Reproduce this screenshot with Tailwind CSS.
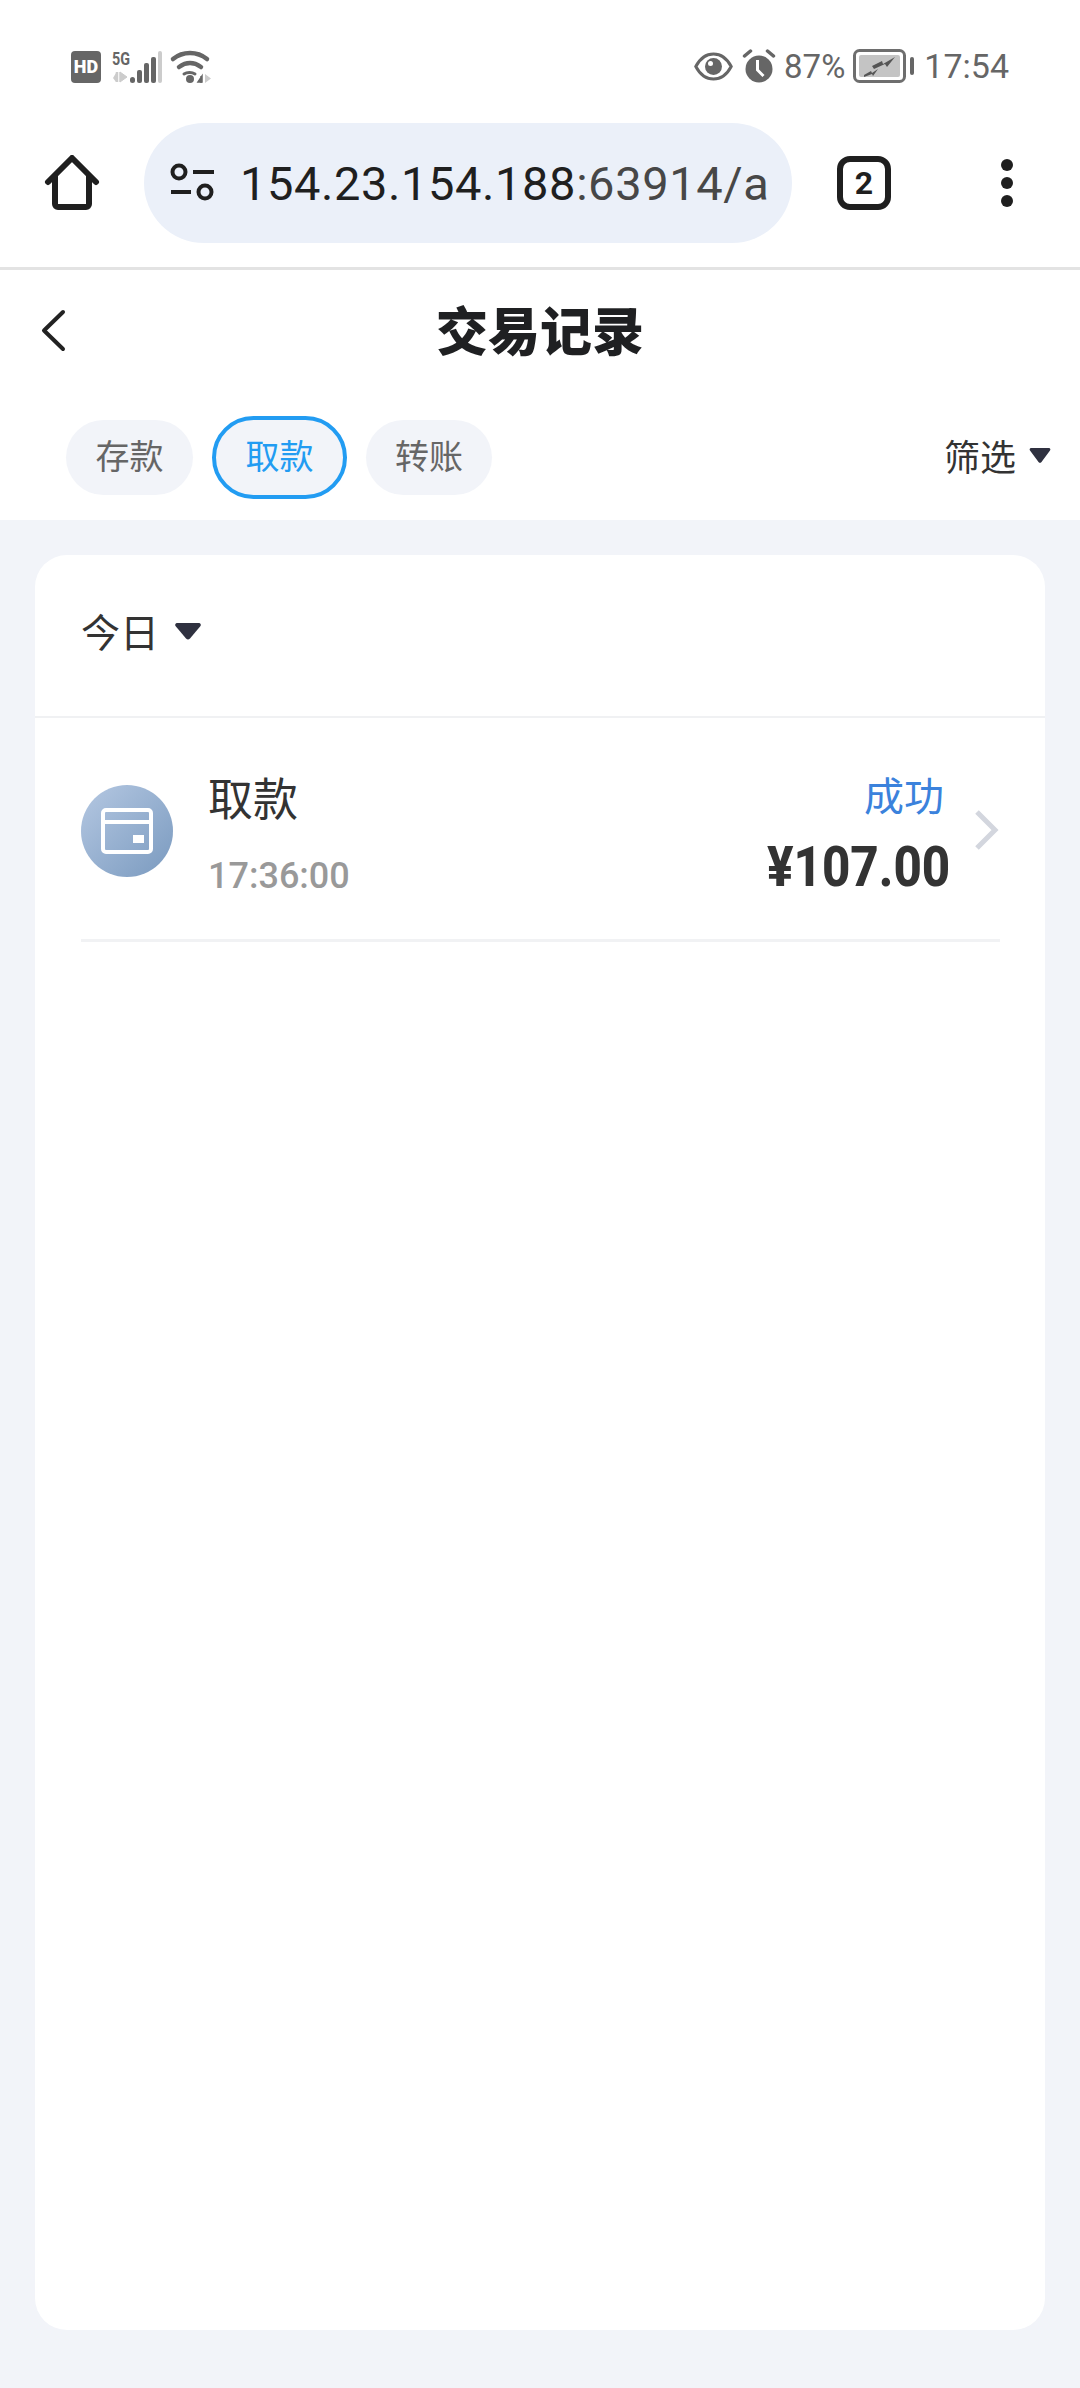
<!DOCTYPE html>
<html lang="zh-CN">
<head>
  <meta charset="UTF-8">
  <meta name="viewport" content="width=device-width, initial-scale=1.0">
  <title>交易记录</title>
  <script src="https://cdn.jsdelivr.net/npm/@tailwindcss/browser@4"></script>
</head>
<body class="bg-[#f2f4f9] font-['Roboto','Noto_Sans_CJK_SC',sans-serif]">
  <div class="w-[1080px] h-[2388px] flex flex-col overflow-hidden">

    <!-- Status bar -->
    <div class="bg-white h-[123px] shrink-0 flex items-start justify-between pt-[48px] pl-[70px] pr-[71px]">
      <div class="flex items-center h-[36px]">
        <svg width="142" height="36" viewBox="0 0 142 36">
          <rect x="1" y="3" width="30" height="32" rx="4" fill="#666"/>
          <text x="16" y="25" text-anchor="middle" font-family="Roboto" font-weight="900" font-size="18" fill="#fff">HD</text>
          <text x="42" y="17" font-family="Roboto" font-weight="700" font-size="19" fill="#666" textLength="18" lengthAdjust="spacingAndGlyphs">5G</text>
          <path d="M47 24v10" stroke="#ccc" stroke-width="2.500"/>
          <path d="M50 24v10M50 34l7-5-7-5z" stroke="#ccc" fill="#ccc"/>
          <path d="M43 30l3-5v9z" fill="#ccc"/>
          <rect x="60" y="29" width="5" height="6" rx="2.500" fill="#666"/>
          <rect x="67" y="22" width="5" height="13" rx="2" fill="#666"/>
          <rect x="74" y="15" width="5" height="20" rx="2" fill="#666"/>
          <rect x="81" y="9" width="5" height="26" rx="2" fill="#666"/>
          <rect x="88" y="3" width="4" height="32" rx="2" fill="#ccc"/>
          <path d="M103 11c10-8 24-8 34 0" fill="none" stroke="#666" stroke-width="4.500" stroke-linecap="round"/>
          <path d="M109 19c7-5 15-5 22 0" fill="none" stroke="#666" stroke-width="4.500" stroke-linecap="round"/>
          <path d="M114 26c3-2 8-2 11 0" fill="none" stroke="#666" stroke-width="3" stroke-linecap="round"/>
          <circle cx="120" cy="31" r="4" fill="#666"/>
          <path d="M128 34l4-6v6zM131 28v7" fill="#666" stroke="#666" stroke-width="1.500"/>
          <path d="M135 26l6 4.500-6 4.500z" fill="#ccc"/>
        </svg>
      </div>
      <div class="flex items-center h-[36px] leading-none text-[#666]">
        <svg width="39" height="31" viewBox="0 0 39 31" class="mr-[9px]">
          <path d="M1.800 15.500C6 7.500 12 3 19.500 3S33 7.500 37.200 15.500C33 23.500 27 28 19.500 28S6 23.500 1.800 15.500z" fill="none" stroke="#666" stroke-width="3"/>
          <circle cx="19.500" cy="15.500" r="8.500" fill="#666"/>
          <circle cx="16.500" cy="12.500" r="2.500" fill="#fff"/>
        </svg>
        <svg width="34" height="34" viewBox="0 0 34 34" class="mr-[8px]">
          <circle cx="17" cy="20" r="13.500" fill="#666"/>
          <path d="M15.500 11v10l6 6" fill="none" stroke="#fff" stroke-width="3"/>
          <path d="M2.500 7l6-5M31.500 7l-6-5" stroke="#666" stroke-width="3.500" stroke-linecap="round"/>
        </svg>
        <span class="mr-[8px] text-[33px]">87%</span>
        <svg width="62" height="34" viewBox="0 0 62 34" class="mr-[9px]">
          <rect x="1.500" y="1.500" width="50" height="31" rx="5" fill="none" stroke="#6e6e6e" stroke-width="3"/>
          <rect x="6" y="6" width="41" height="22" rx="2" fill="#c4c4c4"/>
          <path d="M19 17l10-5 1 3 12-7-8 10-2-3-11 5z" fill="#555"/>
          <path d="M11 26l7-4 1 2 6-4-5 7-1-2-8 3z" fill="#555"/>
          <rect x="57" y="8" width="4" height="18" rx="2" fill="#666"/>
        </svg>
        <span class="text-[34px]">17:54</span>
      </div>
    </div>

    <!-- Browser toolbar -->
    <div class="bg-white h-[147px] shrink-0 border-b-[3px] border-[#e3e3e3]">
      <div class="flex items-start">
        <div class="w-[144px] h-[120px] flex items-center justify-center shrink-0">
          <svg width="56" height="56" viewBox="0 0 56 56">
            <path d="M4 27L28 3l24 24M11 21v28a3 3 0 0 0 3 3h28a3 3 0 0 0 3-3V21" fill="none" stroke="#1f1f1f" stroke-width="6" stroke-linecap="round" stroke-linejoin="round"/>
          </svg>
        </div>
        <div class="w-[648px] h-[120px] rounded-[60px] bg-[#ebf0f9] flex items-center pl-[25px] shrink-0 overflow-hidden">
          <svg width="46" height="40" viewBox="0 0 46 40" class="shrink-0">
            <circle cx="10" cy="9" r="6.500" fill="none" stroke="#1f1f1f" stroke-width="4"/>
            <path d="M24 9h21M2 29h20" stroke="#1f1f1f" stroke-width="4"/>
            <circle cx="36" cy="29" r="6.500" fill="none" stroke="#1f1f1f" stroke-width="4"/>
          </svg>
          <div class="ml-[25px] text-[47px] leading-none whitespace-nowrap text-[#1f1f1f] tracking-[0.6px]">154.23.154.188<span class="text-[#474747]">:63914/a</span></div>
        </div>
        <div class="ml-[45px] w-[54px] h-[54px] mt-[33px] border-[6px] border-[#1f1f1f] rounded-[13px] flex items-center justify-center text-[32px] font-bold text-[#1f1f1f] shrink-0">2</div>
        <div class="ml-[110px] mt-[36px] flex flex-col gap-[6px] shrink-0">
          <div class="w-[12px] h-[12px] rounded-full bg-[#1f1f1f]"></div>
          <div class="w-[12px] h-[12px] rounded-full bg-[#1f1f1f]"></div>
          <div class="w-[12px] h-[12px] rounded-full bg-[#1f1f1f]"></div>
        </div>
      </div>
    </div>

    <!-- Page header -->
    <div class="bg-white h-[250px] shrink-0">
      <div class="relative h-[120px] pt-[7px] flex items-center justify-center">
        <svg width="26" height="44" viewBox="0 0 26 44" class="absolute left-[41px] top-[39px]">
          <path d="M22 3L3 21.500 22 40" fill="none" stroke="#222" stroke-width="4" stroke-linecap="round" stroke-linejoin="round"/>
        </svg>
        <h1 class="text-[52px] leading-none font-black text-[#1f2022]">交易记录</h1>
      </div>
      <div class="flex items-center pl-[66px] pr-[29px] mt-[26px] h-[83px]">
        <div class="w-[127px] h-[75px] rounded-full bg-[#f2f4f9] flex items-center justify-center text-[34px] text-[#666]">存款</div>
        <div class="ml-[19px] w-[135px] h-[83px] rounded-full bg-[#f2f4f9] border-[4px] border-[#229cf2] flex items-center justify-center text-[34px] text-[#229cf2]">取款</div>
        <div class="ml-[19px] w-[126px] h-[75px] rounded-full bg-[#f2f4f9] flex items-center justify-center text-[34px] text-[#666]">转账</div>
        <div class="ml-auto flex items-center pt-[3px]">
          <span class="text-[36px] leading-none text-[#333]">筛选</span>
          <svg width="22" height="17" viewBox="0 0 22 17" class="ml-[13px] mt-[-8px]">
            <path d="M2 1h18a1.500 1.500 0 0 1 1 2.500L12.500 15a2 2 0 0 1-3 0L1 3.500A1.500 1.500 0 0 1 2 1z" fill="#2f3140"/>
          </svg>
        </div>
      </div>
    </div>

    <!-- Card -->
    <div class="mx-[35px] mt-[35px] w-[1010px] h-[1775px] bg-white rounded-[32px] shrink-0">
      <div class="h-[163px] border-b-2 border-[#f0f1f3] flex items-center pl-[46px] pb-[2px]">
        <span class="text-[39px] leading-none text-[#333]">今日</span>
        <svg width="28" height="19" viewBox="0 0 28 19" class="ml-[15px] mt-[-6px]">
          <path d="M3 1h22a2 2 0 0 1 1.500 3L16 16.500a3 3 0 0 1-4 0L1.500 4A2 2 0 0 1 3 1z" fill="#2f3140"/>
        </svg>
      </div>
      <div class="ml-[46px] mr-[45px] h-[224px] border-b-[3px] border-[#f1f2f4] flex items-start">
        <div class="mt-[67px] w-[92px] h-[92px] rounded-full bg-linear-to-br from-[#b5c8e2] to-[#7a9abf] flex items-center justify-center shrink-0">
          <svg width="52" height="46" viewBox="0 0 52 46">
            <rect x="2" y="2" width="48" height="42" rx="3" fill="none" stroke="#fff" stroke-width="4"/>
            <path d="M2 14h48" stroke="#fff" stroke-width="4"/>
            <rect x="32" y="27" width="11" height="8" fill="#fff"/>
          </svg>
        </div>
        <div class="ml-[35px] flex flex-col">
          <span class="mt-[60px] text-[45px] leading-none text-[#333]">取款</span>
          <span class="mt-[35px] text-[36px] leading-none font-medium text-[#999]">17:36:00</span>
        </div>
        <div class="ml-auto flex flex-col items-end mr-[25px]">
          <span class="mt-[60px] mr-[6px] text-[40px] leading-none text-[#3b82dc]">成功</span>
          <span class="mt-[21px] text-[56px] leading-none font-extrabold text-[#333] scale-x-[0.88] origin-right">¥107.00</span>
        </div>
        <svg width="26" height="44" viewBox="0 0 26 44" class="mt-[90px] ml-[-2px] mr-[1px] shrink-0">
          <path d="M4 4l18 18L4 40" fill="none" stroke="#d3d6de" stroke-width="5"/>
        </svg>
      </div>
    </div>

  </div>
</body>
</html>
